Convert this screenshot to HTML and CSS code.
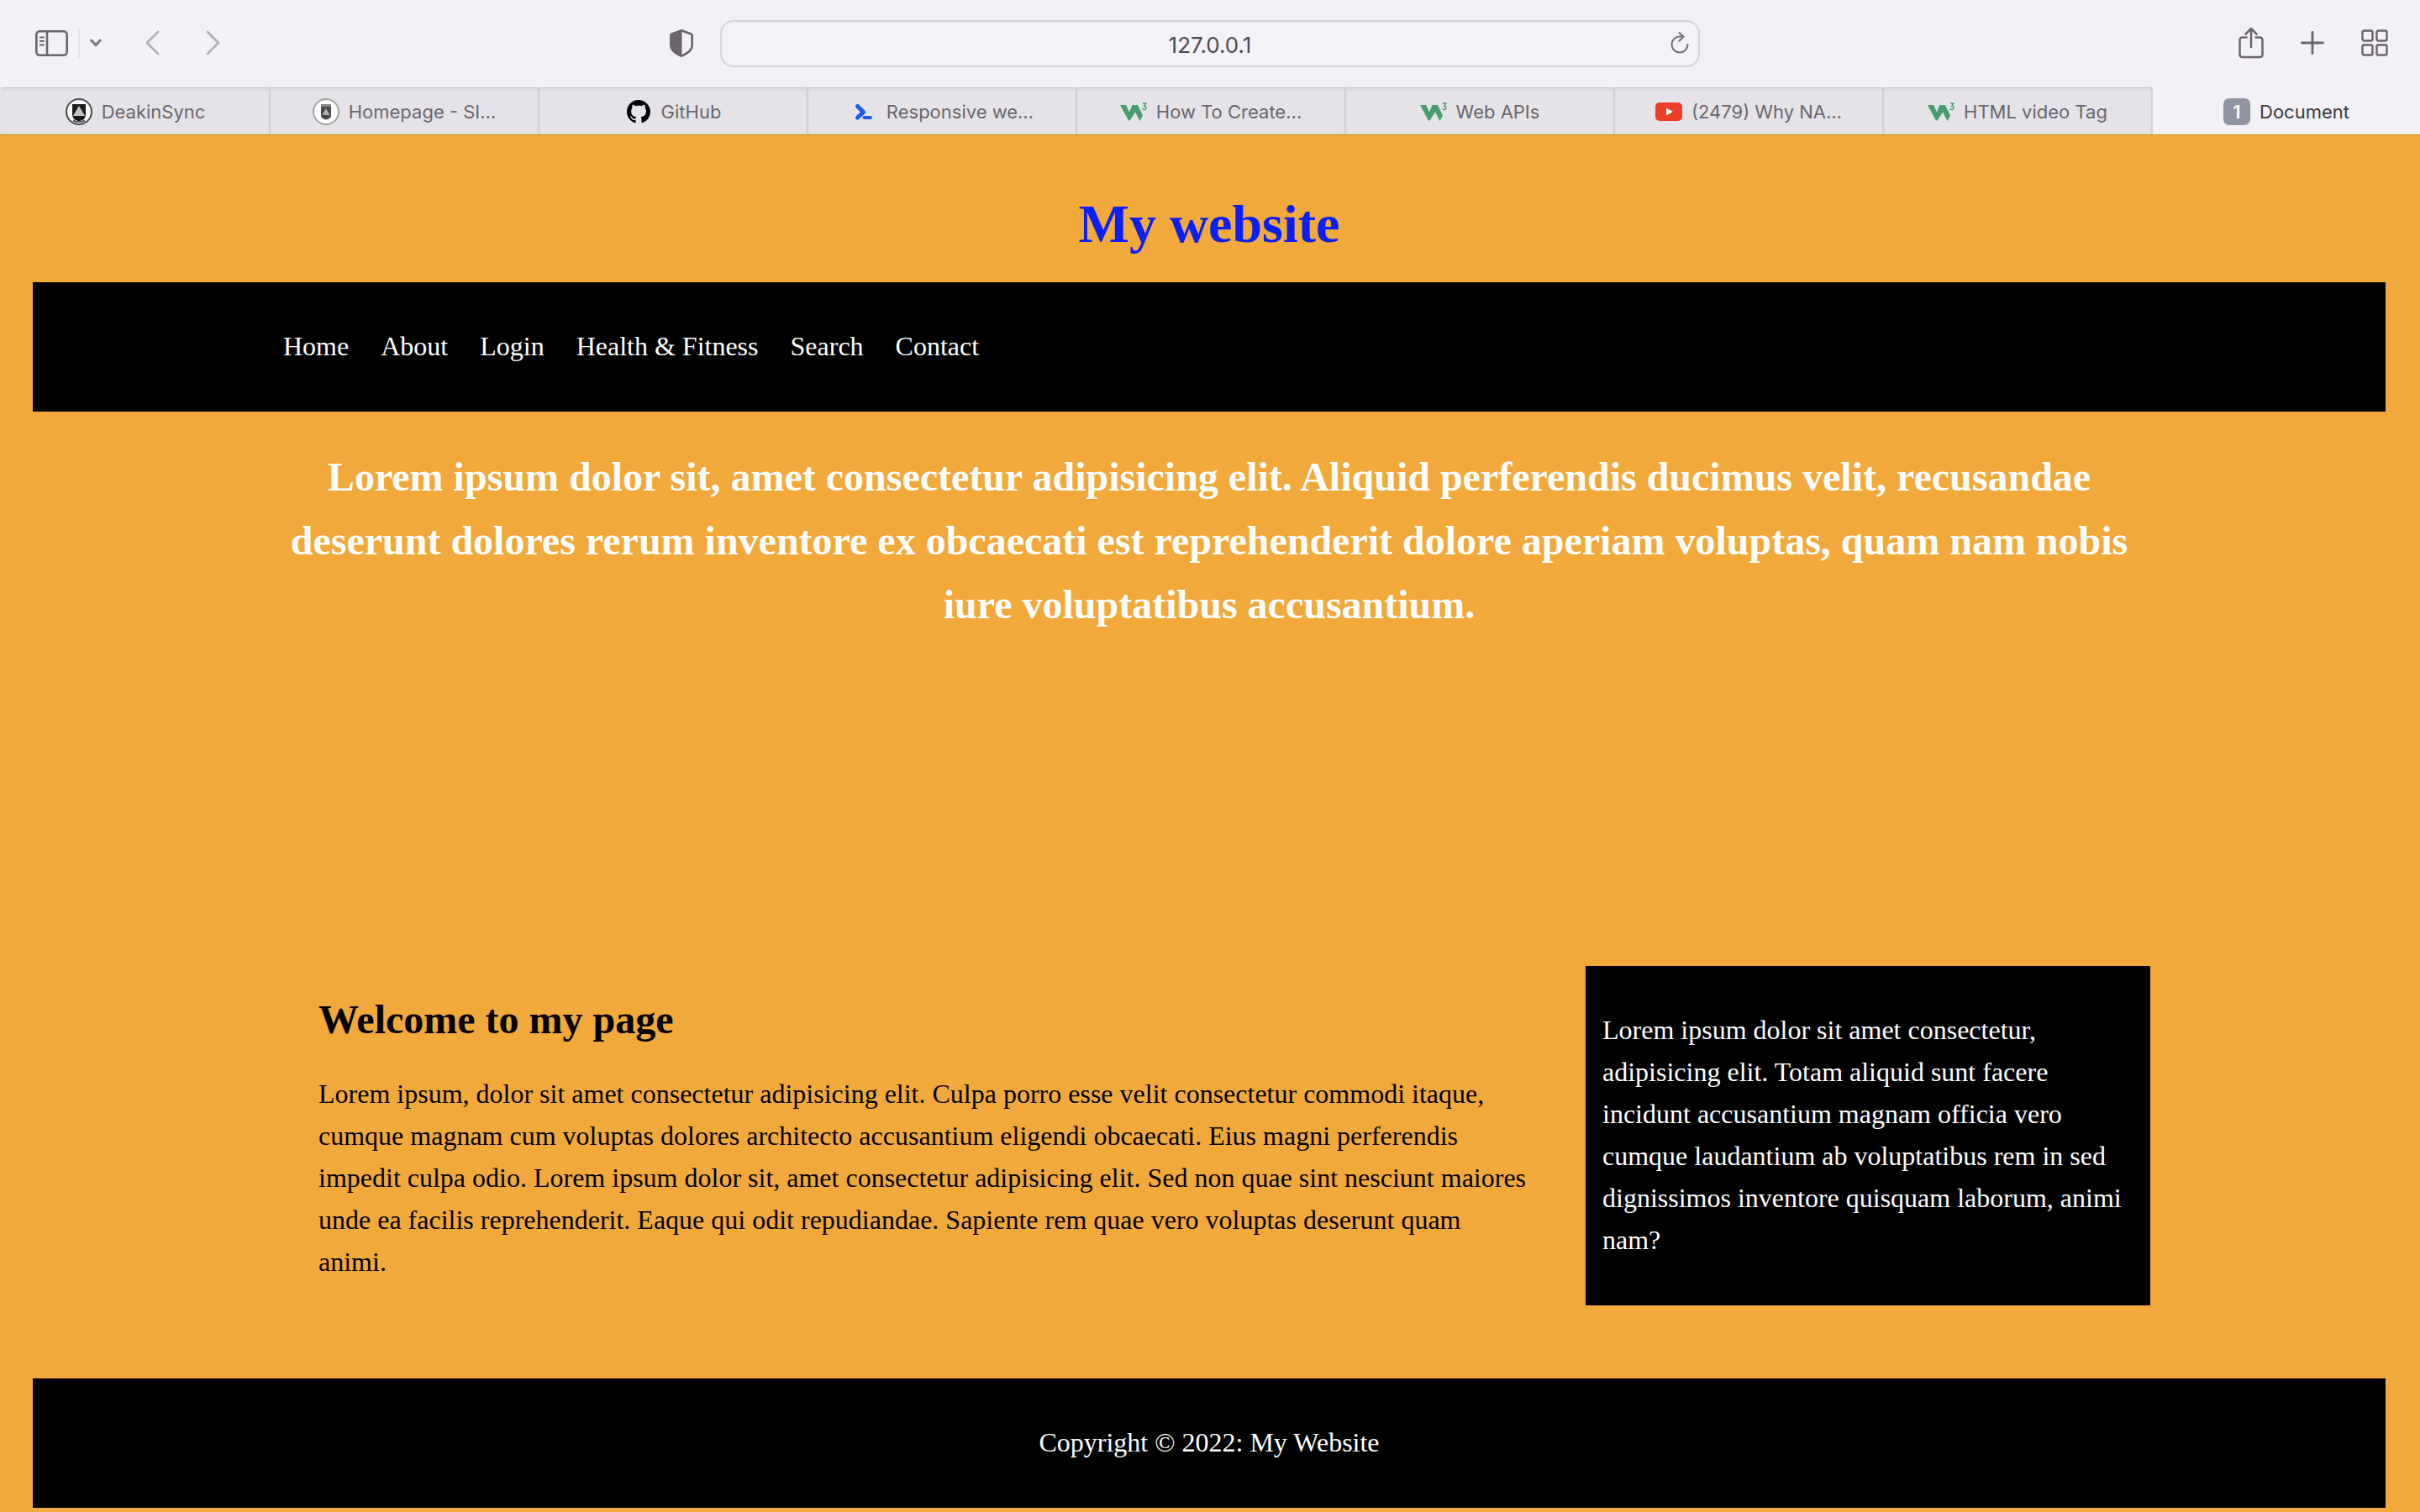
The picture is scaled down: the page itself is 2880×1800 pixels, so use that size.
FILE: index.html
```html
<!DOCTYPE html>
<html lang="en">
<head>
<meta charset="utf-8">
<title>Document</title>
<link rel="stylesheet" href="styles.css">
</head>
<body>
<div class="browser">
  <div class="toolbar">
    <div class="toolbar-left">
      <button class="icon-btn" type="button" aria-label="Sidebar">
        <svg width="39" height="31" viewBox="0 0 39 31" fill="none" stroke="#69656b" stroke-width="2.6" stroke-linecap="round"><rect x="1.3" y="1.3" width="36.4" height="28.4" rx="4"/><path d="M14 1.5v28"/><path stroke-width="2" d="M6 8.5h4M6 13h4M6 17.5h4"/></svg>
      </button>
      <span class="divider"></span>
      <button class="icon-btn" type="button" aria-label="Tab groups">
        <svg width="14" height="10" viewBox="0 0 14 10" fill="none" stroke="#7d7a86" stroke-width="3" stroke-linecap="round" stroke-linejoin="round"><path d="M1.7 2 7 7.6 12.3 2"/></svg>
      </button>
      <button class="icon-btn back" type="button" aria-label="Back">
        <svg width="17" height="30" viewBox="0 0 17 30" fill="none" stroke="#b3b0b7" stroke-width="2.8" stroke-linecap="round" stroke-linejoin="round"><path d="M15 2 2 15l13 13"/></svg>
      </button>
      <button class="icon-btn forward" type="button" aria-label="Forward">
        <svg width="17" height="30" viewBox="0 0 17 30" fill="none" stroke="#b3b0b7" stroke-width="2.8" stroke-linecap="round" stroke-linejoin="round"><path d="M2 2l13 13L2 28"/></svg>
      </button>
      <button class="icon-btn shield" type="button" aria-label="Privacy report">
        <svg width="28" height="33" viewBox="0 0 28 33"><path d="M14 1.3 25.500 5.500q1.200.5 1.200 1.800v12.200c0 5-5.500 9-12.700 12.200C6.800 28.500 1.300 24.500 1.300 19.500V7.300q0-1.300 1.200-1.800z" fill="none" stroke="#69656b" stroke-width="2.6" stroke-linejoin="round"/><path d="M14.500 1.300V31.700C6.800 28.500 1.300 24.500 1.300 19.500V6z" fill="#69656b"/></svg>
      </button>
    </div>
    <div class="address">
      <input class="address-input" type="text" value="127.0.0.1" aria-label="Address">
      <button class="icon-btn reload" type="button" aria-label="Reload">
        <svg width="22" height="26" viewBox="0 0 22 26" fill="none" stroke="#737076" stroke-width="2" stroke-linecap="round" stroke-linejoin="round"><path d="M20.5 15A9.5 9.500 0 1 1 11 5.500h4.500"/><path d="M10.500 1l5 4.700-5 5"/></svg>
      </button>
    </div>
    <div class="toolbar-right">
      <button class="icon-btn" type="button" aria-label="Share">
        <svg width="30" height="38" viewBox="0 0 30 38" fill="none" stroke="#69656b" stroke-width="2.5" stroke-linecap="round" stroke-linejoin="round"><path d="M9.500 12.500H4.500a3 3 0 0 0-3 3V33a3 3 0 0 0 3 3h21a3 3 0 0 0 3-3V15.500a3 3 0 0 0-3-3h-5M15 24V2.500M8.500 8.500 15 2l6.500 6.500"/></svg>
      </button>
      <button class="icon-btn" type="button" aria-label="New tab">
        <svg width="28" height="28" viewBox="0 0 28 28" fill="none" stroke="#69656b" stroke-width="2.8" stroke-linecap="round"><path d="M14 1.500v25M1.500 14h25"/></svg>
      </button>
      <button class="icon-btn" type="button" aria-label="Tab overview">
        <svg width="32" height="32" viewBox="0 0 32 32" fill="none" stroke="#69656b" stroke-width="2.4"><rect x="1.5" y="1.5" width="12" height="12" rx="2"/><rect x="18.5" y="1.5" width="12" height="12" rx="2"/><rect x="1.5" y="18.5" width="12" height="12" rx="2"/><rect x="18.5" y="18.5" width="12" height="12" rx="2"/></svg>
      </button>
    </div>
  </div>

  <svg class="defs" aria-hidden="true">
    <symbol id="w3" viewBox="0 0 32 32"><path fill="#479d6d" d="M0 8h7l4 8.500L14.500 8H21l6 12.500-3.500 6.500L18 16.500 11.500 26.500H10z"/><path d="M27 6h3.800L28.700 9.200c3 0 2.900 4.300.2 4.300-1.100 0-1.900-.5-2.200-1.500" fill="none" stroke="#479d6d" stroke-width="1.400"/></symbol>
  </svg>
  <nav class="tabs" aria-label="Tabs">
    <a class="tab" href="#"><svg class="favicon" viewBox="0 0 32 32"><circle cx="16" cy="16" r="15" fill="#fff" stroke="#4a4a4a" stroke-width="2"/><path d="M8 7h16v11c0 4-1 6-3 7.500l-5 2-5-2C9 24 8 22 8 18z" fill="#1c1c1c"/><path d="M16 9l7 12H9z" fill="#c4c4c4"/><path d="M9 26.500c4 2 10 2 14 0" stroke="#555" stroke-width="2" fill="none"/></svg><span class="tab-title">DeakinSync</span></a>
    <a class="tab" href="#"><svg class="favicon" viewBox="0 0 32 32"><circle cx="16" cy="16" r="15" fill="#fff" stroke="#a3a3a3" stroke-width="2"/><path d="M10 7h12v14c0 2-3 4-6 4.500C13 25 10 23 10 21z" fill="#4a4a4a"/><path d="M10 7h12v3H10z" fill="#888"/><path d="M16 12l4.500 8h-9z" fill="#b0b0b0"/></svg><span class="tab-title">Homepage - SI…</span></a>
    <a class="tab" href="#"><svg class="favicon" viewBox="-1.14 -1.14 18.28 18.28"><path d="M8 0C3.580 0 0 3.580 0 8c0 3.540 2.290 6.530 5.470 7.590.4.070.55-.17.55-.38 0-.19-.01-.82-.01-1.490-2.010.37-2.530-.49-2.690-.94-.09-.23-.48-.94-.82-1.130-.28-.15-.68-.52-.01-.53.63-.01 1.080.58 1.230.82.72 1.210 1.870.87 2.330.66.070-.52.28-.87.51-1.070-1.780-.2-3.640-.89-3.640-3.950 0-.87.31-1.590.82-2.150-.08-.2-.36-1.020.08-2.120 0 0 .67-.21 2.200.82.64-.18 1.320-.27 2-.27s1.360.09 2 .27c1.530-1.040 2.200-.82 2.200-.82.44 1.100.16 1.920.08 2.120.51.56.82 1.270.82 2.150 0 3.070-1.870 3.750-3.650 3.950.29.25.54.73.54 1.480 0 1.070-.01 1.930-.01 2.200 0 .21.15.46.55.38A8.010 8.010 0 0 0 16 8c0-4.420-3.580-8-8-8z"/></svg><span class="tab-title">GitHub</span></a>
    <a class="tab" href="#"><svg class="favicon" viewBox="0 0 32 32" fill="none" stroke="#1a59fb" stroke-linecap="round" stroke-linejoin="round"><path stroke-width="5" d="M8.500 9.500 15.500 16.500"/><path stroke-width="5" d="M15.500 16.500 8.500 23"/><path stroke-width="4" d="M16.500 23H24"/></svg><span class="tab-title">Responsive we…</span></a>
    <a class="tab" href="#"><svg class="favicon"><use href="#w3"/></svg><span class="tab-title">How To Create…</span></a>
    <a class="tab" href="#"><svg class="favicon"><use href="#w3"/></svg><span class="tab-title">Web APIs</span></a>
    <a class="tab" href="#"><svg class="favicon" viewBox="0 0 32 32"><rect y="5" width="32" height="22" rx="5" fill="#eb4027"/><path d="M13 11.500 21 16l-8 4.500z" fill="#fff"/></svg><span class="tab-title">(2479) Why NA…</span></a>
    <a class="tab" href="#"><svg class="favicon"><use href="#w3"/></svg><span class="tab-title">HTML video Tag</span></a>
    <a class="tab active" href="#" aria-current="page"><span class="badge">1</span><span class="tab-title">Document</span></a>
  </nav>
</div>

<div class="page">
  <header class="site-header"><h1>My website</h1></header>
  <nav class="navbar">
    <ul class="container nav-list">
      <li><a href="#">Home</a></li>
      <li><a href="#">About</a></li>
      <li><a href="#">Login</a></li>
      <li><a href="#">Health &amp; Fitness</a></li>
      <li><a href="#">Search</a></li>
      <li><a href="#">Contact</a></li>
    </ul>
  </nav>
  <section class="showcase container">
    <h2>Lorem ipsum dolor sit, amet consectetur adipisicing elit. Aliquid perferendis ducimus velit, recusandae deserunt dolores rerum inventore ex obcaecati est reprehenderit dolore aperiam voluptas, quam nam nobis iure voluptatibus accusantium.</h2>
  </section>
  <div class="content container">
    <main class="main">
      <h2>Welcome to my page</h2>
      <p>Lorem ipsum, dolor sit amet consectetur adipisicing elit. Culpa porro esse velit consectetur commodi itaque, cumque magnam cum voluptas dolores architecto accusantium eligendi obcaecati. Eius magni perferendis impedit culpa odio. Lorem ipsum dolor sit, amet consectetur adipisicing elit. Sed non quae sint nesciunt maiores unde ea facilis reprehenderit. Eaque qui odit repudiandae. Sapiente rem quae vero voluptas deserunt quam animi.</p>
    </main>
    <aside class="sidebar">
      <p>Lorem ipsum dolor sit amet consectetur, adipisicing elit. Totam aliquid sunt facere incidunt accusantium magnam officia vero cumque laudantium ab voluptatibus rem in sed dignissimos inventore quisquam laborum, animi nam?</p>
    </aside>
  </div>
  <footer class="footer"><p>Copyright © 2022: My Website</p></footer>
</div>
</body>
</html>
```
FILE: styles.css
```css
* {
  box-sizing: border-box;
}

body {
  margin: 0;
  background: #f2a93b;
  font: 32px/50px "Liberation Serif", "Times New Roman", serif;
  color: #000;
}

h1,
h2,
p,
ul {
  margin: 0;
}

/* Browser chrome */
.browser {
  font: 22px/28px Inter, "Liberation Sans", sans-serif;
  background: #f3f0f6;
}

.toolbar {
  display: grid;
  grid-template-columns: 1fr minmax(0, 1166px) 1fr;
  align-items: center;
  height: 104px;
  padding: 0 38px 2px 42px;
}

.toolbar-left,
.toolbar-right {
  display: flex;
  align-items: center;
}

.toolbar-left {
  padding-right: 34px;
}

.toolbar-right {
  justify-content: flex-end;
  gap: 44px;
}

.icon-btn {
  display: flex;
  padding: 0;
  border: 0;
  background: none;
}

.divider {
  width: 2px;
  height: 36px;
  margin: 0 12px;
  background: #e4e1e7;
}

.back {
  margin-left: 52px;
}

.forward {
  margin-left: 55px;
}

.shield {
  margin-left: auto;
}

.address {
  position: relative;
  margin: 2px 2px 0 -2px;
}

.address-input {
  display: block;
  width: 100%;
  height: 56px;
  padding: 2px 48px 0;
  border: 2px solid #d6d3d9;
  border-radius: 16px;
  background: #f4f1f7;
  color: #4b494d;
  font: 26px/28px Inter, "Liberation Sans", sans-serif;
  text-align: center;
}

.reload {
  position: absolute;
  top: 14px;
  right: 13px;
}

.defs {
  display: none;
}

.tabs {
  display: flex;
  height: 56px;
}

.tab {
  display: flex;
  flex: 1 1 0;
  align-items: center;
  justify-content: center;
  gap: 11px;
  min-width: 0;
  padding-top: 2px;
  border-left: 2px solid #d1ced4;
  background: #e5e3e8;
  box-shadow: inset 0 1px #c3c1c6, inset 0 3px 3px #d8d6db;
  color: #69666c;
  text-decoration: none;
  white-space: nowrap;
}

.tab:first-child {
  border-left-color: #e5e3e8;
}

.tab.active {
  background: #f3f0f6;
  box-shadow: none;
  color: #3b393e;
}

.favicon {
  width: 32px;
  height: 32px;
}

.badge {
  width: 32px;
  border-radius: 7px;
  background: #9194a1;
  color: #fff;
  font-weight: 600;
  line-height: 32px;
  text-align: center;
}

/* Page */
.page {
  padding: 0 41px 5px 39px;
  border-top: 1px solid #cc8a26;
}

.container {
  width: 80%;
  margin: 0 auto;
}

.site-header {
  padding: 56px 0 19px;
  text-align: center;
}

.site-header h1 {
  color: #0a1ff5;
  font-size: 64px;
  line-height: 100px;
}

.navbar {
  padding: 51px 0 53px;
  background: #000;
}

.nav-list {
  display: flex;
  gap: 38px;
  padding: 0 18px;
  list-style: none;
}

.nav-list a {
  color: #fff;
  text-decoration: none;
}

.showcase {
  min-height: 660px;
  padding-top: 40px;
  color: #fff;
  text-align: center;
}

.showcase h2 {
  font-size: 48px;
  line-height: 76px;
}

.content {
  display: grid;
  grid-template-columns: 7fr 3fr;
}

.main {
  padding: 26px 68px 26px 60px;
}

.main h2 {
  margin-bottom: 25px;
  font-size: 48px;
  line-height: 76px;
}

.sidebar {
  padding: 51px 20px 53px;
  background: #000;
  color: #fff;
}

.footer {
  margin-top: 87px;
  padding: 51px 0 53px;
  background: #000;
  color: #fff;
  text-align: center;
}
```
